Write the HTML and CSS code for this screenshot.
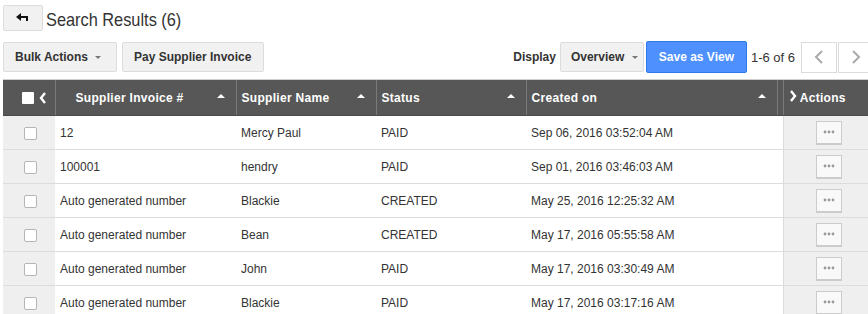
FILE: index.html
```html
<!DOCTYPE html>
<html lang="en">
<head>
  <meta charset="UTF-8">
  <title>Search Results</title>
  <link rel="stylesheet" href="styles.css">
</head>
<body>
  <div class="page-header">
    <button class="back-button">
      <svg width="14" height="10" viewBox="0 0 14 10"><path d="M5 0 L0 4 L5 8 Z" fill="#111"/><rect x="4" y="3" width="7" height="2" fill="#111"/><rect x="10" y="3" width="2" height="5" fill="#111"/></svg>
    </button>
    <h1>Search Results (6)</h1>
  </div>

  <div class="toolbar">
    <button class="btn btn-bulk">Bulk Actions <span class="caret"></span></button>
    <button class="btn btn-pay">Pay Supplier Invoice</button>
    <span class="display-label">Display</span>
    <button class="btn btn-overview">Overview <span class="caret"></span></button>
    <button class="btn btn-primary">Save as View</button>
    <span class="page-count">1-6 of 6</span>
    <button class="pager-btn"><svg width="10" height="16" viewBox="0 0 10 16"><path d="M8 2 L2 8 L8 14" fill="none" stroke="#aaa" stroke-width="2"/></svg></button>
    <button class="pager-btn"><svg width="10" height="16" viewBox="0 0 10 16"><path d="M2 2 L8 8 L2 14" fill="none" stroke="#aaa" stroke-width="2"/></svg></button>
  </div>

  <table id="results-table">
    <colgroup>
      <col class="w-check">
      <col class="w-invoice">
      <col class="w-name">
      <col class="w-status">
      <col class="w-created">
      <col class="w-spacer">
      <col class="w-actions">
    </colgroup>
    <thead>
      <tr>
        <th class="check-col"><span class="head-check"></span><svg class="collapse" width="8" height="12" viewBox="0 0 8 12"><path d="M6 1 L2 6 L6 11" fill="none" stroke="#fff" stroke-width="2.4"/></svg></th>
        <th class="col-invoice sortable">Supplier Invoice #</th>
        <th class="sortable">Supplier Name</th>
        <th class="sortable">Status</th>
        <th class="sortable">Created on</th>
        <th class="spacer"></th>
        <th class="col-actions"><svg width="8" height="12" viewBox="0 0 8 12"><path d="M2 1 L6 6 L2 11" fill="none" stroke="#fff" stroke-width="2.4"/></svg> Actions</th>
      </tr>
    </thead>
    <tbody>
      <tr><td class="check-col"><span class="row-check"></span></td><td>12</td><td>Mercy Paul</td><td>PAID</td><td>Sep 06, 2016 03:52:04 AM</td><td class="spacer"></td><td class="col-actions"><button class="more"><svg width="12" height="4" viewBox="0 0 12 4"><circle cx="2" cy="2" r="1.4"/><circle cx="6" cy="2" r="1.4"/><circle cx="10" cy="2" r="1.4"/></svg></button></td></tr>
      <tr><td class="check-col"><span class="row-check"></span></td><td>100001</td><td>hendry</td><td>PAID</td><td>Sep 01, 2016 03:46:03 AM</td><td class="spacer"></td><td class="col-actions"><button class="more"><svg width="12" height="4" viewBox="0 0 12 4"><circle cx="2" cy="2" r="1.4"/><circle cx="6" cy="2" r="1.4"/><circle cx="10" cy="2" r="1.4"/></svg></button></td></tr>
      <tr><td class="check-col"><span class="row-check"></span></td><td>Auto generated number</td><td>Blackie</td><td>CREATED</td><td>May 25, 2016 12:25:32 AM</td><td class="spacer"></td><td class="col-actions"><button class="more"><svg width="12" height="4" viewBox="0 0 12 4"><circle cx="2" cy="2" r="1.4"/><circle cx="6" cy="2" r="1.4"/><circle cx="10" cy="2" r="1.4"/></svg></button></td></tr>
      <tr><td class="check-col"><span class="row-check"></span></td><td>Auto generated number</td><td>Bean</td><td>CREATED</td><td>May 17, 2016 05:55:58 AM</td><td class="spacer"></td><td class="col-actions"><button class="more"><svg width="12" height="4" viewBox="0 0 12 4"><circle cx="2" cy="2" r="1.4"/><circle cx="6" cy="2" r="1.4"/><circle cx="10" cy="2" r="1.4"/></svg></button></td></tr>
      <tr><td class="check-col"><span class="row-check"></span></td><td>Auto generated number</td><td>John</td><td>PAID</td><td>May 17, 2016 03:30:49 AM</td><td class="spacer"></td><td class="col-actions"><button class="more"><svg width="12" height="4" viewBox="0 0 12 4"><circle cx="2" cy="2" r="1.4"/><circle cx="6" cy="2" r="1.4"/><circle cx="10" cy="2" r="1.4"/></svg></button></td></tr>
      <tr><td class="check-col"><span class="row-check"></span></td><td>Auto generated number</td><td>Blackie</td><td>PAID</td><td>May 17, 2016 03:17:16 AM</td><td class="spacer"></td><td class="col-actions"><button class="more"><svg width="12" height="4" viewBox="0 0 12 4"><circle cx="2" cy="2" r="1.4"/><circle cx="6" cy="2" r="1.4"/><circle cx="10" cy="2" r="1.4"/></svg></button></td></tr>
    </tbody>
  </table>
</body>
</html>
```

FILE: styles.css
```css
body {
  font-family: "Liberation Sans", Arial, sans-serif;
  color: #333;
  margin: 0;
  padding: 5px 0 0 3px;
  overflow: hidden;
  background-color: #fff;
}
.page-header {
  display: flex;
  align-items: center;
  gap: 3px;
  height: 26px;
}
.back-button {
  width: 40px;
  height: 26px;
  background-color: #f1f1f1;
  border: 1px solid #dcdcdc;
  border-radius: 2px;
  padding: 0;
  display: flex;
  align-items: center;
  justify-content: center;
}
h1 {
  margin: 0;
  font-size: 19px;
  font-weight: normal;
  color: #333;
  padding-top: 4px;
  transform: scaleX(0.86);
  transform-origin: left center;
  white-space: nowrap;
}
.toolbar {
  display: flex;
  align-items: center;
  margin-top: 10px;
  height: 32px;
  width: 871px;
}
.btn {
  font-family: inherit;
  font-size: 12px;
  font-weight: bold;
  color: #333;
  background-color: #f1f1f1;
  border: 1px solid #dcdcdc;
  border-radius: 2px;
  height: 30px;
  padding: 0 10px;
  white-space: nowrap;
  cursor: pointer;
  text-align: left;
}
.btn-bulk {
  width: 114px;
  padding-left: 11px;
}
.btn-pay {
  width: 142px;
  margin-left: 5px;
  padding-left: 11px;
}
.btn-overview {
  width: 84px;
  margin-left: 4px;
}
.caret {
  display: inline-block;
  border-left: 3px solid transparent;
  border-right: 3px solid transparent;
  border-top: 3px solid #777;
  vertical-align: middle;
  margin-left: 4px;
}
.btn-primary {
  background-color: #4d90fe;
  border-color: #3079ed;
  color: #fff;
  width: 101px;
  height: 32px;
  margin-left: 2px;
  text-align: center;
  padding: 0;
}
.display-label {
  font-size: 12px;
  font-weight: bold;
  margin-left: auto;
}
.page-count {
  font-size: 13px;
  margin-left: 4px;
  white-space: nowrap;
}
.pager-btn {
  width: 36px;
  height: 31px;
  flex-shrink: 0;
  background-color: #fff;
  border: 1px solid #dcdcdc;
  padding: 0;
  margin-left: 1px;
  display: flex;
  align-items: center;
  justify-content: center;
}
.page-count + .pager-btn {
  margin-left: 6px;
}
#results-table {
  border-collapse: collapse;
  margin-top: 6px;
  width: 868px;
  table-layout: fixed;
  font-size: 12px;
}
.w-check { width: 52px; }
.w-invoice { width: 181px; }
.w-name { width: 140px; }
.w-status { width: 150px; }
.w-created { width: 251px; }
.w-spacer { width: 6px; }
.w-actions { width: 88px; }
th {
  background-color: #575757;
  color: #fff;
  font-weight: bold;
  letter-spacing: 0.3px;
  text-align: left;
  height: 35px;
  padding: 0 5px;
  border-top: 1px solid #cfcfcf;
  border-bottom: 1px solid #4a4a4a;
  border-left: 1px solid #7a7a7a;
  position: relative;
}
td {
  height: 33px;
  padding: 0 5px;
  border-bottom: 1px solid #dcdcdc;
  white-space: nowrap;
  overflow: hidden;
}
.check-col {
  background-color: #efefef;
  text-align: center;
  padding: 0;
}
th.check-col {
  background-color: #575757;
  border-left: none;
  padding-left: 19px;
  text-align: left;
}
.head-check {
  display: inline-block;
  width: 12px;
  height: 12px;
  background-color: #fff;
  border-radius: 1px;
  vertical-align: middle;
}
.collapse {
  vertical-align: middle;
  margin-left: 5px;
}
.row-check {
  display: inline-block;
  width: 11px;
  height: 11px;
  border: 1px solid #b5b5b5;
  border-radius: 2px;
  background-color: #fff;
  vertical-align: middle;
  margin-left: 3px;
}
th.col-invoice {
  padding-left: 20px;
}
.spacer {
  padding: 0;
}
.sortable::after {
  content: "";
  position: absolute;
  right: 11px;
  top: 14px;
  border-left: 4px solid transparent;
  border-right: 4px solid transparent;
  border-bottom: 4px solid #fff;
}
.col-actions {
  background-color: #efefef;
  border-left: 1px solid #dcdcdc;
}
th.col-actions {
  background-color: #575757;
  border-left: 1px solid #7a7a7a;
  padding-left: 5px;
}
td.col-actions {
  padding-left: 32px;
}
.more {
  width: 26px;
  height: 24px;
  background-color: #f9f9f9;
  border: 1px solid #ccc;
  border-bottom-width: 2px;
  fill: #999;
  padding: 0;
  display: flex;
  align-items: center;
  justify-content: center;
}
```
